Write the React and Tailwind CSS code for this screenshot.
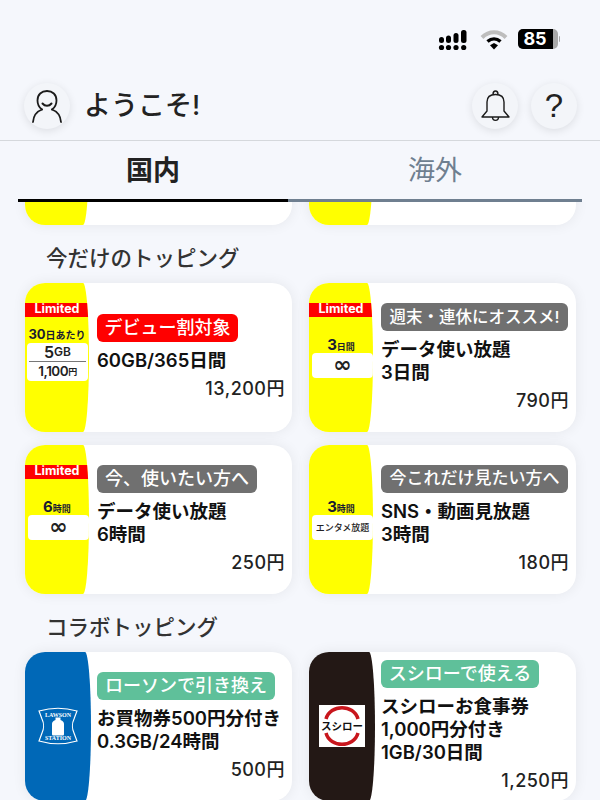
const FONT = "font-['Inter','Noto_Sans_CJK_JP',sans-serif]";

const CARDS_TOP = [
  {
    limited: true,
    label: (
      <>
        30<span className="text-[10px]">日あたり</span>
      </>
    ),
    deal: true,
    badge: "デビュー割対象",
    badgeClass: "bg-[#ff0000] text-[18px] w-[141px]",
    lines: ["60GB/365日間"],
    price: "13,200円",
  },
  {
    limited: true,
    label: (
      <>
        3<span className="text-[9px]">日間</span>
      </>
    ),
    box: "∞",
    badge: "週末・連休にオススメ!",
    badgeClass: "bg-[#707070] text-[16.5px] w-[187px]",
    lines: ["データ使い放題", "3日間"],
    price: "790円",
  },
  {
    limited: true,
    label: (
      <>
        6<span className="text-[9px]">時間</span>
      </>
    ),
    box: "∞",
    badge: "今、使いたい方へ",
    badgeClass: "bg-[#707070] text-[18px] w-[160px]",
    lines: ["データ使い放題", "6時間"],
    price: "250円",
  },
  {
    label: (
      <>
        3<span className="text-[9px]">時間</span>
      </>
    ),
    box: "エンタメ放題",
    badge: "今これだけ見たい方へ",
    badgeClass: "bg-[#707070] text-[17px] w-[187px]",
    lines: ["SNS・動画見放題", "3時間"],
    price: "180円",
  },
];

function SignalIcon() {
  return (
    <svg className="mr-[2px]" width="30" height="22" viewBox="0 0 30 22" fill="#000">
      <rect x="1" y="8" width="5" height="6" rx="2.5" />
      <rect x="8" y="6.5" width="5" height="7.5" rx="2.5" />
      <rect x="15.5" y="4" width="5" height="10" rx="2.5" />
      <rect x="23" y="1" width="5.5" height="13" rx="2.5" />
      <circle cx="3.5" cy="18.5" r="2.6" />
      <circle cx="10.5" cy="18.5" r="2.6" />
      <circle cx="18" cy="18.5" r="2.6" />
      <circle cx="25.7" cy="18.5" r="2.6" />
    </svg>
  );
}

function WifiIcon() {
  return (
    <svg width="28" height="22" viewBox="0 0 28 22" fill="none">
      <path d="M2 8.5C9 1.5 19 1.5 26 8.5" stroke="#bdbdbd" strokeWidth="4" />
      <path d="M7.5 12.5C11.5 9 16.5 9 20.5 12.5" stroke="#000" strokeWidth="3.4" />
      <path d="M10 16.2L14 14 18 16.2 14 20.5Z" fill="#000" />
    </svg>
  );
}

function Battery() {
  return (
    <div className="flex items-center">
      <div className="flex h-[20px] w-[40px] overflow-hidden rounded-[5px] bg-[#a9a9a9]">
        <div className="flex w-[35px] items-center justify-center bg-black font-['Inter',sans-serif] text-[18px] font-bold text-white leading-none">
          85
        </div>
      </div>
      <div className="ml-[1px] h-[6px] w-[1.5px] rounded-r bg-[#a9a9a9]" />
    </div>
  );
}

function CircleButton({ children }) {
  return (
    <div className="flex h-[46px] w-[46px] items-center justify-center rounded-full bg-[#f3f5f9] shadow-[0_2px_8px_rgba(0,0,0,0.10)]">
      {children}
    </div>
  );
}

function PersonIcon() {
  return (
    <svg width="46" height="46" viewBox="0 0 46 46" fill="none" stroke="#1b1b1b" strokeWidth="1.8" strokeLinecap="round">
      <path d="M18 26.5C14.5 24 13.5 20.5 13.5 17.5 13.5 11.5 17.5 8 23 8 28.5 8 32.5 11.5 32.5 17.5 32.5 20.5 31.5 24 28 26.5" />
      <path d="M18 26.5C12.5 28.5 9.5 33 9 39" />
      <path d="M28 26.5C33.5 28.5 36.5 33 37 39" />
      <path d="M18.5 20.5C21 23.5 25 23.5 27.5 20.5" strokeWidth="2" />
    </svg>
  );
}

function BellIcon() {
  return (
    <svg width="46" height="46" viewBox="0 0 46 46" fill="none" stroke="#1b1b1b" strokeWidth="1.4" strokeLinejoin="round">
      <path d="M10 34L15 28V19C15 14 18 11.5 23.5 11.5 29 11.5 32 14 32 19V28L37 34Z" />
      <path d="M21 11.5C21 9 22.3 8 23.5 8 24.7 8 26 9 26 11.5" />
      <path d="M20.5 34C20.5 38.5 26.5 38.5 26.5 34" />
    </svg>
  );
}

function LawsonLogo() {
  return (
    <svg width="42" height="38" viewBox="0 0 42 38">
      <path
        d="M2 4C14 0.5 28 0.5 40 4L37 12C35 16 35 22 37 26L40 34C28 37.5 14 37.5 2 34L5 26C7 22 7 16 5 12Z"
        fill="none"
        stroke="#fff"
        strokeWidth="1.2"
      />
      <text x="21" y="9.5" textAnchor="middle" fill="#fff" fontSize="6" fontWeight="700" fontFamily="Liberation Serif, serif">
        LAWSON
      </text>
      <text x="21" y="33" textAnchor="middle" fill="#fff" fontSize="6" fontWeight="700" fontFamily="Liberation Serif, serif">
        STATION
      </text>
      <path
        d="M18.5 10.5H23.5V13C26 14 27 15 27 17V27C27 28 26.5 28.5 25.5 28.5H16.5C15.5 28.5 15 28 15 27V17C15 15 16 14 18.5 13Z"
        fill="#fff"
      />
    </svg>
  );
}

function SushiroLogo() {
  return (
    <div className="flex h-[42px] w-[46px] items-center justify-center bg-white">
      <svg width="46" height="42" viewBox="0 0 46 42">
        <path d="M7 14C11 -1 35 -1 39 14" fill="none" stroke="#c8161d" strokeWidth="3.5" />
        <path d="M7 28C11 43 35 43 39 28" fill="none" stroke="#c8161d" strokeWidth="3.5" />
        <text x="23" y="25" textAnchor="middle" fill="#111" fontSize="10.5" fontWeight="700" fontFamily="Noto Sans CJK JP, sans-serif">
          スシロー
        </text>
      </svg>
    </div>
  );
}

function YellowPanel({ item }) {
  return (
    <div className="flex h-full w-[64px] shrink-0 flex-col overflow-hidden rounded-r-[6px_75px] bg-[#ffff00] pt-[20px]">
      <div className={item.limited ? "flex h-[14px] items-center justify-center bg-[#ff0000] font-['Inter',sans-serif] text-[12.5px] font-bold text-white" : "h-[14px]"}>
        {item.limited ? "Limited" : null}
      </div>
      {item.deal ? (
        <>
          <div className="mt-[9px] h-[17px] text-center text-[13px] leading-[17px] font-bold text-[#1b1b30]">{item.label}</div>
          <div className="ml-[2px] flex h-[38px] w-[61px] flex-col rounded-[4px] bg-white">
            <div className="mx-[2px] flex h-[19px] items-center justify-center border-b border-[#777] text-[16px] font-semibold text-[#222]">
              5<span className="text-[12px]">GB</span>
            </div>
            <div className="flex h-[19px] items-center justify-center text-[13.5px] font-semibold tracking-[-0.5px] text-[#222]">
              1,100<span className="text-[9px]">円</span>
            </div>
          </div>
        </>
      ) : (
        <>
          <div className="mt-[19px] h-[17px] text-center text-[15px] leading-[17px] font-bold text-[#1b1b30]">{item.label}</div>
          <div className="ml-[3px] flex h-[25px] w-[61px] items-center justify-center rounded-[4px] bg-white font-bold text-[#222]">
            {item.box === "∞" ? (
              <span className="font-['DejaVu_Sans',sans-serif] text-[22px] leading-none">∞</span>
            ) : (
              <span className="text-[9px] font-medium whitespace-nowrap">{item.box}</span>
            )}
          </div>
        </>
      )}
    </div>
  );
}

function LogoPanel({ color, children }) {
  return (
    <div className={`-mr-[2px] flex h-full w-[66px] shrink-0 items-center justify-center rounded-r-[6px_75px] pr-[1px] ${color}`}>
      {children}
    </div>
  );
}

function Card({ panel, item }) {
  return (
    <div className="flex h-[149px] w-[267px] overflow-hidden rounded-[20px] bg-white shadow-[0_0_14px_rgba(0,0,30,0.07)]">
      {panel}
      {item ? (
        <div className="flex min-w-0 grow flex-col justify-center pr-[7px] pl-[8px]">
          <div className={`flex h-[28px] items-center justify-center rounded-[6px] leading-none font-medium whitespace-nowrap text-white ${item.badgeClass}`}>
            {item.badge}
          </div>
          <div className="mt-[7px] text-[18.5px] leading-[23px] font-semibold whitespace-nowrap text-[#111]">
            {item.lines.map((line) => (
              <div key={line}>{line}</div>
            ))}
          </div>
          <div className="mt-[5px] text-right text-[18px] leading-[23px] font-medium tracking-[0.5px] text-[#222]">{item.price}</div>
        </div>
      ) : null}
    </div>
  );
}

function Heading({ children, className }) {
  return <h2 className={`pl-[46px] text-[21.5px] leading-[30px] font-medium text-[#333] ${className}`}>{children}</h2>;
}

export default function App() {
  return (
    <div className={`flex h-[800px] w-[600px] flex-col overflow-hidden bg-[#f5f7fc] ${FONT}`}>
      <div className="flex h-[83px] items-start justify-end gap-[10px] pt-[29px] pr-[40px]">
        <SignalIcon />
        <WifiIcon />
        <Battery />
      </div>

      <div className="flex h-[58px] items-start justify-between border-b border-[#d5d8dc] pr-[23px] pl-[24px]">
        <div className="flex items-center gap-[14px]">
          <CircleButton>
            <PersonIcon />
          </CircleButton>
          <span className="text-[27px] leading-[46px] font-medium text-[#222]">ようこそ!</span>
        </div>
        <div className="flex gap-[13px]">
          <CircleButton>
            <BellIcon />
          </CircleButton>
          <CircleButton>
            <span className="font-['Liberation_Sans',sans-serif] text-[33px] leading-none text-[#222]">?</span>
          </CircleButton>
        </div>
      </div>

      <div className="mx-[18px] flex h-[61px]">
        <div className="flex w-[270px] items-center justify-center border-b-[3px] border-black pt-[2px] text-[27px] font-bold text-[#222]">国内</div>
        <div className="flex w-[294px] items-center justify-center border-b-[3px] border-[#6f7f90] pt-[2px] text-[27px] text-[#6f7f90]">海外</div>
      </div>

      <div className="min-h-0 grow overflow-hidden">
        <div className="-mt-[126px]">
          <div className="flex gap-[17px] pl-[25px]">
            <Card panel={<div className="h-full w-[64px] shrink-0 rounded-r-[6px_75px] bg-[#ffff00]" />} />
            <Card panel={<div className="h-full w-[64px] shrink-0 rounded-r-[6px_75px] bg-[#ffff00]" />} />
          </div>

          <Heading className="mt-[18px] mb-[10px]">今だけのトッピング</Heading>
          <div className="grid grid-cols-[267px_267px] gap-x-[17px] gap-y-[13px] pl-[25px]">
            {CARDS_TOP.map((item) => (
              <Card key={item.badge} item={item} panel={<YellowPanel item={item} />} />
            ))}
          </div>

          <Heading className="mt-[18px] mb-[10px]">コラボトッピング</Heading>
          <div className="flex gap-[17px] pl-[25px]">
            <Card
              panel={
                <LogoPanel color="bg-[#0068b7]">
                  <LawsonLogo />
                </LogoPanel>
              }
              item={{
                badge: "ローソンで引き換え",
                badgeClass: "bg-[#5fc09a] text-[18px] w-[178px]",
                lines: ["お買物券500円分付き", "0.3GB/24時間"],
                price: "500円",
              }}
            />
            <Card
              panel={
                <LogoPanel color="bg-[#231815]">
                  <SushiroLogo />
                </LogoPanel>
              }
              item={{
                badge: "スシローで使える",
                badgeClass: "bg-[#5fc09a] text-[18px] w-[158px]",
                lines: ["スシローお食事券", "1,000円分付き", "1GB/30日間"],
                price: "1,250円",
              }}
            />
          </div>
        </div>
      </div>
    </div>
  );
}
